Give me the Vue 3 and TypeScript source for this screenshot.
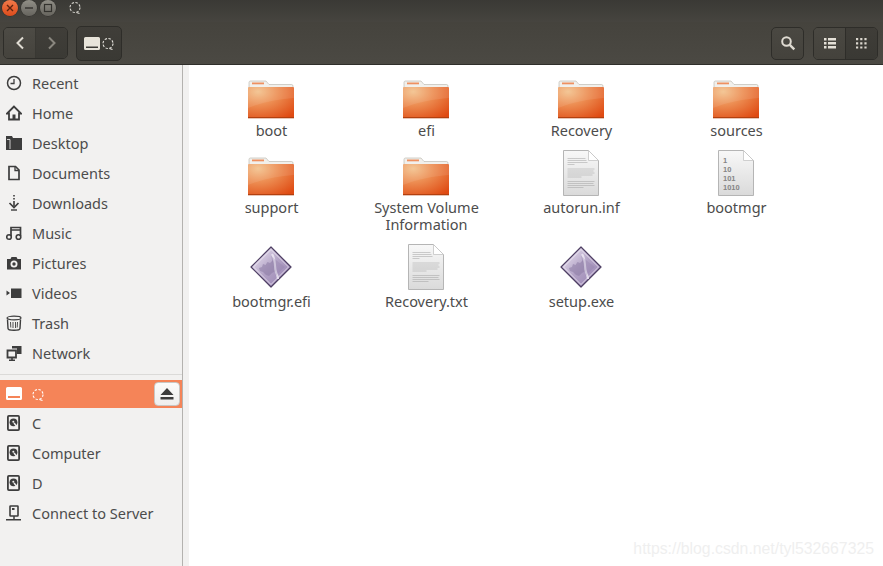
<template>
  <div class="window">
    <header class="titlebar">
      <button class="win-btn close">
        <svg width="10" height="10" viewBox="0 0 10 10"><path d="M2 2l6 6M8 2l-6 6" stroke="#5e2410" stroke-width="1.4" /></svg>
      </button>
      <button class="win-btn">
        <svg width="10" height="10" viewBox="0 0 10 10"><path d="M1 5h8" stroke="#33322e" stroke-width="1.4" /></svg>
      </button>
      <button class="win-btn">
        <svg width="10" height="10" viewBox="0 0 10 10"><rect x="1.5" y="1.5" width="7" height="7" fill="none" stroke="#33322e" stroke-width="1.2" /></svg>
      </button>
      <svg class="title-glyph" width="14" height="14" viewBox="0 0 14 14">
        <circle cx="7" cy="6.5" r="5" fill="none" stroke="#d8d6d0" stroke-width="1.1" stroke-dasharray="2.4 1.5" />
        <path d="M8.5 11.5l3 1" stroke="#d8d6d0" stroke-width="1.1" />
      </svg>
    </header>

    <div class="toolbar">
      <div class="btn-group nav">
        <button class="tool-btn back">
          <svg width="12" height="14" viewBox="0 0 12 14"><path d="M9 1.5L3.5 7 9 12.5" fill="none" stroke="#dfdbd2" stroke-width="2" /></svg>
        </button>
        <button class="tool-btn forward">
          <svg width="12" height="14" viewBox="0 0 12 14"><path d="M3 1.5L8.5 7 3 12.5" fill="none" stroke="#8a877f" stroke-width="2" /></svg>
        </button>
      </div>
      <button class="path-btn">
        <svg width="16" height="13" viewBox="0 0 16 13"><path d="M1.5 0h13A1.5 1.5 0 0 1 16 1.500v10a1.500 1.500 0 0 1-1.500 1.500h-13A1.500 1.500 0 0 1 0 11.500v-10A1.500 1.500 0 0 1 1.500 0zM2 9.500V11h12V9.500z" fill="#e8e4da" fill-rule="evenodd" /></svg>
        <svg class="path-glyph" width="14" height="14" viewBox="0 0 14 14">
          <circle cx="7" cy="6.500" r="5" fill="none" stroke="#e6e4de" stroke-width="1.100" stroke-dasharray="2.400 1.500" />
          <path d="M8.500 11.500l3 1" stroke="#e6e4de" stroke-width="1.100" />
        </svg>
      </button>
      <div class="spacer"></div>
      <button class="tool-btn single">
        <svg width="16" height="16" viewBox="0 0 16 16"><circle cx="6.500" cy="6.500" r="4.300" fill="none" stroke="#dfdbd2" stroke-width="2" /><path d="M9.800 9.800l4.500 4.500" stroke="#dfdbd2" stroke-width="2.400" /></svg>
      </button>
      <div class="btn-group views">
        <button class="tool-btn view">
          <svg width="12" height="11" viewBox="0 0 12 11" fill="#e4e0d7"><path d="M0 0h2.500v2.500H0zM4 0h8v2.500H4zM0 4h2.500v2.500H0zM4 4h8v2.500H4zM0 8h2.500v2.500H0zM4 8h8v2.500H4z" /></svg>
        </button>
        <button class="tool-btn view active">
          <svg width="11" height="11" viewBox="0 0 11 11" fill="#dcd8cf"><path d="M0 0h2.200v2.200H0zM4.200 0h2.200v2.200H4.200zM8.400 0h2.200v2.200H8.400zM0 4.200h2.200v2.200H0zM4.200 4.200h2.200v2.200H4.200zM8.400 4.200h2.200v2.200H8.400zM0 8.400h2.200v2.200H0zM4.200 8.400h2.200v2.200H4.200zM8.400 8.400h2.200v2.200H8.400z" /></svg>
        </button>
      </div>
    </div>

    <div class="body">
      <aside class="sidebar">
        <div v-for="place in places" :key="place.label" class="row">
          <svg class="row-icon" width="16" height="16" viewBox="0 0 16 16" v-html="sideIcons[place.icon]"></svg>
          <span>{{ place.label }}</span>
        </div>
        <div class="separator"></div>
        <div class="row selected">
          <svg class="row-icon" width="16" height="16" viewBox="0 0 16 16" v-html="sideIcons.drive"></svg>
          <svg class="row-glyph" width="14" height="14" viewBox="0 0 14 14">
            <circle cx="6" cy="6.500" r="5" fill="none" stroke="#fff" stroke-width="1.100" stroke-dasharray="2.400 1.500" />
            <path d="M7.500 11.500l3 1" stroke="#fff" stroke-width="1.100" />
          </svg>
          <button class="eject">
            <svg width="14" height="12" viewBox="0 0 14 12" fill="#3c3c3c"><path d="M7 0l6.500 7H.5zM.5 9h13v2.500H.5z" /></svg>
          </button>
        </div>
        <div v-for="place in devices" :key="place.label" class="row">
          <svg class="row-icon" width="16" height="16" viewBox="0 0 16 16" v-html="sideIcons[place.icon]"></svg>
          <span>{{ place.label }}</span>
        </div>
      </aside>
      <div class="gutter"></div>

      <main class="files">
        <div v-for="file in files" :key="file.name" class="file">
          <div class="file-icon">
            <svg v-if="file.kind === 'folder'" width="48" height="48" viewBox="0 0 48 48">
              <defs>
                <radialGradient id="folderBody" cx="0.22" cy="0.15" r="1.05">
                  <stop offset="0" stop-color="#f2c18c" />
                  <stop offset="0.4" stop-color="#ed8f54" />
                  <stop offset="1" stop-color="#df4a12" />
                </radialGradient>
              </defs>
              <path d="M2 16V10.500C2 9.700 2.600 9 3.400 9h15.600l3 3.500h22.600c.8 0 1.400.6 1.400 1.400V16z" fill="#f1f0ec" stroke="#b5b2aa" stroke-width=".6" />
              <rect x="5" y="10.500" width="12" height="1.800" fill="#ee9060" />
              <rect x="1" y="15" width="46" height="31" rx="1" fill="url(#folderBody)" />
              <path d="M1 15h46v11C32 27 16 30 1 36z" fill="#fff" opacity=".09" />
              <rect x="1" y="45" width="46" height="1.300" fill="#b3400f" />
            </svg>

            <svg v-else-if="file.kind === 'text' || file.kind === 'binary'" width="48" height="48" viewBox="0 0 48 48">
              <defs>
                <linearGradient id="paper" x1="0" y1="0" x2="0" y2="1">
                  <stop offset="0" stop-color="#f8f8f8" />
                  <stop offset="1" stop-color="#dadada" />
                </linearGradient>
              </defs>
              <path d="M6.500 1.500h25l10 10v35h-35z" fill="url(#paper)" stroke="#b5b5b5" />
              <path d="M31.500 1.500v10h10z" fill="#fff" stroke="#c4c4c4" stroke-width=".8" />
              <g v-if="file.kind === 'text'" stroke="#a0a0a0" stroke-width=".5">
                <path d="M10.500 9.500h18M10.500 11.500h19M10.500 13.500h20M10.500 15.500h7" />
                <path d="M10.500 20h27M10.500 22h26M10.500 24h27M10.500 26h25M10.500 28h14" />
                <path d="M10.500 32.500h27M10.500 34.500h26M10.500 36.500h27M10.500 38.500h16" />
              </g>
              <text v-else font-family="Liberation Sans, sans-serif" font-size="7.500" font-weight="700" fill="#858585">
                <tspan x="11" y="14">1</tspan>
                <tspan x="11" y="23">10</tspan>
                <tspan x="11" y="32">101</tspan>
                <tspan x="11" y="41">1010</tspan>
              </text>
            </svg>

            <svg v-else width="48" height="48" viewBox="0 0 48 48">
              <defs>
                <linearGradient id="exe" x1="0.1" y1="0.1" x2="0.9" y2="0.9">
                  <stop offset="0" stop-color="#e9e2f0" />
                  <stop offset="0.5" stop-color="#b3a3c6" />
                  <stop offset="1" stop-color="#9985b3" />
                </linearGradient>
              </defs>
              <path d="M24 4L44 24 24 44 4 24z" fill="url(#exe)" stroke="#4e3f63" stroke-width="1.200" stroke-linejoin="round" />
              <path d="M24 6.500L41.500 24 24 41.500 6.500 24z" fill="none" stroke="#f2edf7" stroke-width=".9" opacity=".8" />
              <path d="M12 25l3-1 1-3 2.500 1 2-3 2.500 1 3-3 2 6 1 5-4 2-3 3-3-1-3-3-3-1z" fill="#8f7ea6" opacity=".6" />
              <path d="M25 11c4 6 2 12 4 18 1 3 2 5 2 7" fill="none" stroke="#f3eff8" stroke-width="2.200" opacity=".75" />
              <path d="M24 13c5 4 10 8 14 11-4 3-6 6-9 9" fill="#7f6d9a" opacity=".22" />
            </svg>
          </div>
          <div class="file-name">{{ file.name }}</div>
        </div>
      </main>
    </div>

    <div class="watermark">https://blog.csdn.net/tyl532667325</div>
  </div>
</template>

<script setup lang="ts">
type FileKind = 'folder' | 'text' | 'binary' | 'exe'

const sideIcons: Record<string, string> = {
  recent:
    '<circle cx="8" cy="8" r="6.500" fill="none" stroke="#3d3d3d" stroke-width="1.500"/><path d="M8 4v4.500H4.500" fill="none" stroke="#3d3d3d" stroke-width="1.300"/>',
  home: '<path d="M8 1.500L1 8.500h2V14.500h10V8.500h2z" fill="none" stroke="#3d3d3d" stroke-width="1.800"/><path d="M6.500 9.500h3v5h-3z" fill="#3d3d3d"/>',
  desktop:
    '<path d="M0 1h6l1 2h9v12H0z" fill="#3d3d3d"/><path d="M1 4.500h3V14" fill="none" stroke="#f2f1f0" stroke-width=".8"/>',
  documents:
    '<path d="M3 1.500h6.500l3.500 3.500v9.500H3z" fill="none" stroke="#3d3d3d" stroke-width="1.700"/><path d="M9 1.500V5.500h4" fill="none" stroke="#3d3d3d" stroke-width="1.300"/>',
  downloads:
    '<path d="M8 0v1.500M8 3v1.500M8 6v5" stroke="#3d3d3d" stroke-width="1.600"/><path d="M3.500 8L8 12.500 12.500 8" fill="none" stroke="#3d3d3d" stroke-width="1.700"/><path d="M5 15h6" stroke="#3d3d3d" stroke-width="1.400"/>',
  music:
    '<path d="M5 11V2.500h9.500V11M5 5h9.500" fill="none" stroke="#3d3d3d" stroke-width="1.700"/><circle cx="3" cy="12" r="2.300" fill="none" stroke="#3d3d3d" stroke-width="1.600"/><circle cx="12.500" cy="12" r="2.300" fill="none" stroke="#3d3d3d" stroke-width="1.600"/>',
  pictures:
    '<path d="M1 4h3.500l1-2h5l1 2H15v10.500H1z" fill="#3d3d3d"/><circle cx="8" cy="9" r="3.500" fill="#f2f1f0"/><circle cx="8" cy="9" r="1.700" fill="#3d3d3d"/>',
  videos:
    '<path d="M5 3.500h10.500v9.500H5z" fill="#3d3d3d"/><path d="M.5 5.500L4 8 .5 10.500z" fill="#3d3d3d"/>',
  trash:
    '<ellipse cx="8" cy="3" rx="7" ry="1.800" fill="none" stroke="#3d3d3d" stroke-width="1.200"/><path d="M1.500 4.500l.5 9c0 1 2 1.800 6 1.800s6-.8 6-1.800l.5-9" fill="none" stroke="#3d3d3d" stroke-width="1.400"/><path d="M4.500 7l.3 5.500M7 7v6M9.500 7v6M11.500 7l-.3 5.500" stroke="#3d3d3d" stroke-width=".9"/>',
  network:
    '<path d="M6 1h9.500v8H11V3.500H6z" fill="#3d3d3d"/><path d="M1.500 5.500h8.500v7H1.500z" fill="#f2f1f0" stroke="#3d3d3d" stroke-width="1.800"/><path d="M3 15.200h6M6 12.500v2.500" stroke="#3d3d3d" stroke-width="1.600"/>',
  drive:
    '<path d="M1.500 1h13A1.500 1.500 0 0 1 16 2.500v10a1.500 1.500 0 0 1-1.500 1.500h-13A1.500 1.500 0 0 1 0 12.500v-10A1.500 1.500 0 0 1 1.500 1zM2 10v2h12v-2z" fill="#fff" fill-rule="evenodd"/>',
  disk:
    '<rect x="1.900" y=".9" width="11.200" height="14.200" rx="1" fill="none" stroke="#3d3d3d" stroke-width="1.800"/><circle cx="7.500" cy="7.300" r="3.900" fill="#3d3d3d"/><circle cx="7.300" cy="6.800" r="1" fill="#f2f1f0"/><path d="M8 8l2.800 3.500" stroke="#f2f1f0" stroke-width="1.500"/>',
  server:
    '<rect x="4" y="1" width="8" height="10" rx=".5" fill="none" stroke="#3d3d3d" stroke-width="1.600"/><rect x="6" y="3" width="2.500" height="2" fill="#3d3d3d"/><path d="M8 11v3M0 14.800h15" stroke="#3d3d3d" stroke-width="1.500"/>',
}

const places = [
  { label: 'Recent', icon: 'recent' },
  { label: 'Home', icon: 'home' },
  { label: 'Desktop', icon: 'desktop' },
  { label: 'Documents', icon: 'documents' },
  { label: 'Downloads', icon: 'downloads' },
  { label: 'Music', icon: 'music' },
  { label: 'Pictures', icon: 'pictures' },
  { label: 'Videos', icon: 'videos' },
  { label: 'Trash', icon: 'trash' },
  { label: 'Network', icon: 'network' },
]

const devices = [
  { label: 'C', icon: 'disk' },
  { label: 'Computer', icon: 'disk' },
  { label: 'D', icon: 'disk' },
  { label: 'Connect to Server', icon: 'server' },
]

const files: { name: string; kind: FileKind }[] = [
  { name: 'boot', kind: 'folder' },
  { name: 'efi', kind: 'folder' },
  { name: 'Recovery', kind: 'folder' },
  { name: 'sources', kind: 'folder' },
  { name: 'support', kind: 'folder' },
  { name: 'System Volume Information', kind: 'folder' },
  { name: 'autorun.inf', kind: 'text' },
  { name: 'bootmgr', kind: 'binary' },
  { name: 'bootmgr.efi', kind: 'exe' },
  { name: 'Recovery.txt', kind: 'text' },
  { name: 'setup.exe', kind: 'exe' },
]
</script>

<style>
html,
body {
  margin: 0;
  overflow: hidden;
}
</style>

<style scoped>
.window {
  position: relative;
  width: 883px;
  height: 566px;
  display: flex;
  flex-direction: column;
  overflow: hidden;
  background: #fff;
  font-family: "Noto Sans", sans-serif;
  font-size: 14.5px;
  color: #4c4c4c;
}

button {
  padding: 0;
  border: 0;
  background: none;
  display: flex;
  align-items: center;
  justify-content: center;
}

.titlebar {
  height: 22px;
  flex: none;
  display: flex;
  align-items: flex-start;
  gap: 3px;
  padding-left: 2px;
  box-sizing: border-box;
  background: linear-gradient(#3a3935, #46443f);
}

.win-btn {
  width: 16px;
  height: 16px;
  border-radius: 50%;
  background: linear-gradient(#918f87, #66645e);
  box-shadow: 0 0 0 .5px #2e2d2a;
}

.win-btn.close {
  background: linear-gradient(#f27a4a, #dd4c1c);
}

.title-glyph {
  margin: 1px 0 0 9px;
}

.toolbar {
  height: 43px;
  flex: none;
  display: flex;
  align-items: center;
  box-sizing: border-box;
  padding: 0 5px 0 3px;
  background: linear-gradient(#45433d, #4b4943);
  border-bottom: 1px solid #2f2e2a;
}

.btn-group {
  display: flex;
  height: 32px;
  box-sizing: border-box;
  border: 1px solid #2e2d29;
  border-radius: 5px;
  overflow: hidden;
}

.tool-btn {
  background: linear-gradient(#4a4842, #44423c);
}

.nav {
  width: 65px;
}

.back,
.forward {
  flex: 1;
}

.back {
  background: linear-gradient(#4d4b45, #45433d);
  border-right: 1px solid #393833;
}

.forward {
  background: linear-gradient(#403e39, #3b3a35);
}

.path-btn {
  width: 46px;
  height: 35px;
  margin-left: 8px;
  gap: 1px;
  box-sizing: border-box;
  border: 1px solid #2e2d29;
  border-radius: 5px;
  background: linear-gradient(#403e39, #3a3934);
}

.path-glyph {
  margin-top: 2px;
}

.spacer {
  flex: 1;
}

.single {
  width: 33px;
  height: 33px;
  box-sizing: border-box;
  border: 1px solid #2e2d29;
  border-radius: 5px;
}

.views {
  width: 65px;
  height: 33px;
  margin-left: 9px;
}

.view {
  flex: 1;
}

.view.active {
  background: linear-gradient(#3f3d38, #3a3934);
  border-left: 1px solid #2e2d29;
}

.body {
  flex: 1;
  display: flex;
  min-height: 0;
}

.sidebar {
  width: 183px;
  flex: none;
  box-sizing: border-box;
  padding-top: 3px;
  background: #f2f1f0;
  border-right: 1px solid #b4b2af;
}

.gutter {
  width: 6px;
  flex: none;
  background: #f2f1f0;
}

.row {
  position: relative;
  height: 30px;
  display: flex;
  align-items: center;
  padding-left: 6px;
  white-space: nowrap;
}

.row-icon {
  flex: none;
  margin-right: 10px;
}

.separator {
  height: 1px;
  margin: 6px 0 5px;
  background: #dbdad8;
}

.row.selected {
  height: 28px;
  background: #f58458;
}

.row-glyph {
  flex: none;
  margin-top: 1px;
}

.eject {
  position: absolute;
  right: 2px;
  top: 2px;
  width: 26px;
  height: 24px;
  border: 1px solid #c9c7c4;
  border-radius: 4px;
  background: linear-gradient(#fbfbfa, #efeeed);
}

.files {
  flex: 1;
  display: grid;
  grid-template-columns: repeat(4, 155px);
  align-content: start;
  row-gap: 10px;
  padding: 7px 0 0 4px;
}

.file {
  display: flex;
  flex-direction: column;
  align-items: center;
}

.file-icon {
  width: 48px;
  height: 48px;
  margin-bottom: 2px;
}

.file-name {
  width: 122px;
  padding-left: 2px;
  text-align: center;
  line-height: 17px;
}

.watermark {
  position: absolute;
  right: 9px;
  bottom: 8px;
  font-family: "Liberation Sans", sans-serif;
  font-size: 15.8px;
  color: #efefef;
}
</style>
